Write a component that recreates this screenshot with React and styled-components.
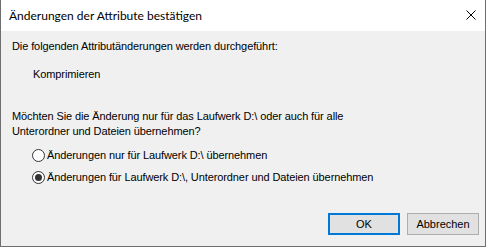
import React, { useState } from 'react';
import styled, { createGlobalStyle } from 'styled-components';

const GlobalStyle = createGlobalStyle`
  html, body {
    margin: 0;
    padding: 0;
    background: #ffffff;
  }
  body {
    font-family: "Liberation Sans", Arial, sans-serif;
  }
`;

const Window = styled.div`
  width: 486px;
  height: 247px;
  box-sizing: border-box;
  display: flex;
  flex-direction: column;
  border-left: 1px solid #6e6e6e;
  border-right: 1px solid #6e6e6e;
  border-bottom: 1px solid #6e6e6e;
  background: #f0f0f0;
`;

const TitleBar = styled.div`
  height: 31px;
  flex-shrink: 0;
  background: #ffffff;
  display: flex;
  align-items: center;
  justify-content: space-between;
  padding-left: 8px;
`;

const Title = styled.span`
  font-family: Lato, "Noto Sans", sans-serif;
  font-size: 12px;
  color: #000;
`;

const CloseButton = styled.button`
  width: 40px;
  height: 31px;
  border: none;
  background: transparent;
  display: flex;
  align-items: center;
  justify-content: flex-end;
  padding: 0 9px 1px 0;
`;

const Body = styled.div`
  flex: 1;
  display: flex;
  flex-direction: column;
  padding: 8px 6px 11px 11px;
`;

const Text = styled.div`
  font-size: 11px;
  line-height: 15px;
  letter-spacing: -0.1px;
  color: #000;
  margin-top: ${(p) => p.$gap || 0}px;
  padding-left: ${(p) => p.$indent || 0}px;
`;

const Options = styled.div`
  display: flex;
  flex-direction: column;
  gap: 6px;
  margin-top: 8px;
  padding-left: 20px;
`;

const RadioRow = styled.label`
  display: flex;
  align-items: center;
  gap: 2px;
  height: 16px;
  font-size: 11px;
  letter-spacing: -0.1px;
  color: #000;
`;

const RadioCircle = styled.span`
  width: 13px;
  height: 13px;
  box-sizing: border-box;
  border-radius: 50%;
  border: 1px solid #333;
  background: #fff;
  display: flex;
  align-items: center;
  justify-content: center;

  &::after {
    content: '';
    width: 7px;
    height: 7px;
    border-radius: 50%;
    background: ${(p) => (p.$checked ? '#333' : 'transparent')};
  }
`;

const Footer = styled.div`
  margin-top: auto;
  display: flex;
  justify-content: flex-end;
  gap: 7px;
`;

const Button = styled.button`
  width: 72px;
  height: 22px;
  box-sizing: border-box;
  font-family: "Liberation Sans", Arial, sans-serif;
  font-size: 11px;
  color: #000;
  background: #e1e1e1;
  border: ${(p) => (p.$default ? '2px solid #0078d7' : '1px solid #adadad')};
  padding: 0;
`;

export default function App() {
  const [choice, setChoice] = useState(1);
  const options = [
    'Änderungen nur für Laufwerk D:\\ übernehmen',
    'Änderungen für Laufwerk D:\\, Unterordner und Dateien übernehmen',
  ];

  return (
    <>
      <GlobalStyle />
      <Window>
        <TitleBar>
          <Title>Änderungen der Attribute bestätigen</Title>
          <CloseButton aria-label="Schließen">
            <svg width="10" height="10" viewBox="0 0 10 10">
              <path d="M0.5 0.5 L9.5 9.5 M9.5 0.5 L0.5 9.5" stroke="#000" strokeWidth="1" />
            </svg>
          </CloseButton>
        </TitleBar>
        <Body>
          <Text>Die folgenden Attributänderungen werden durchgeführt:</Text>
          <Text $gap={13} $indent={21}>Komprimieren</Text>
          <Text $gap={27}>
            Möchten Sie die Änderung nur für das Laufwerk D:\ oder auch für alle
            <br />
            Unterordner und Dateien übernehmen?
          </Text>
          <Options>
            {options.map((o, i) => (
              <RadioRow key={i} onClick={() => setChoice(i)}>
                <RadioCircle $checked={choice === i} />
                {o}
              </RadioRow>
            ))}
          </Options>
          <Footer>
            <Button $default>OK</Button>
            <Button>Abbrechen</Button>
          </Footer>
        </Body>
      </Window>
    </>
  );
}
